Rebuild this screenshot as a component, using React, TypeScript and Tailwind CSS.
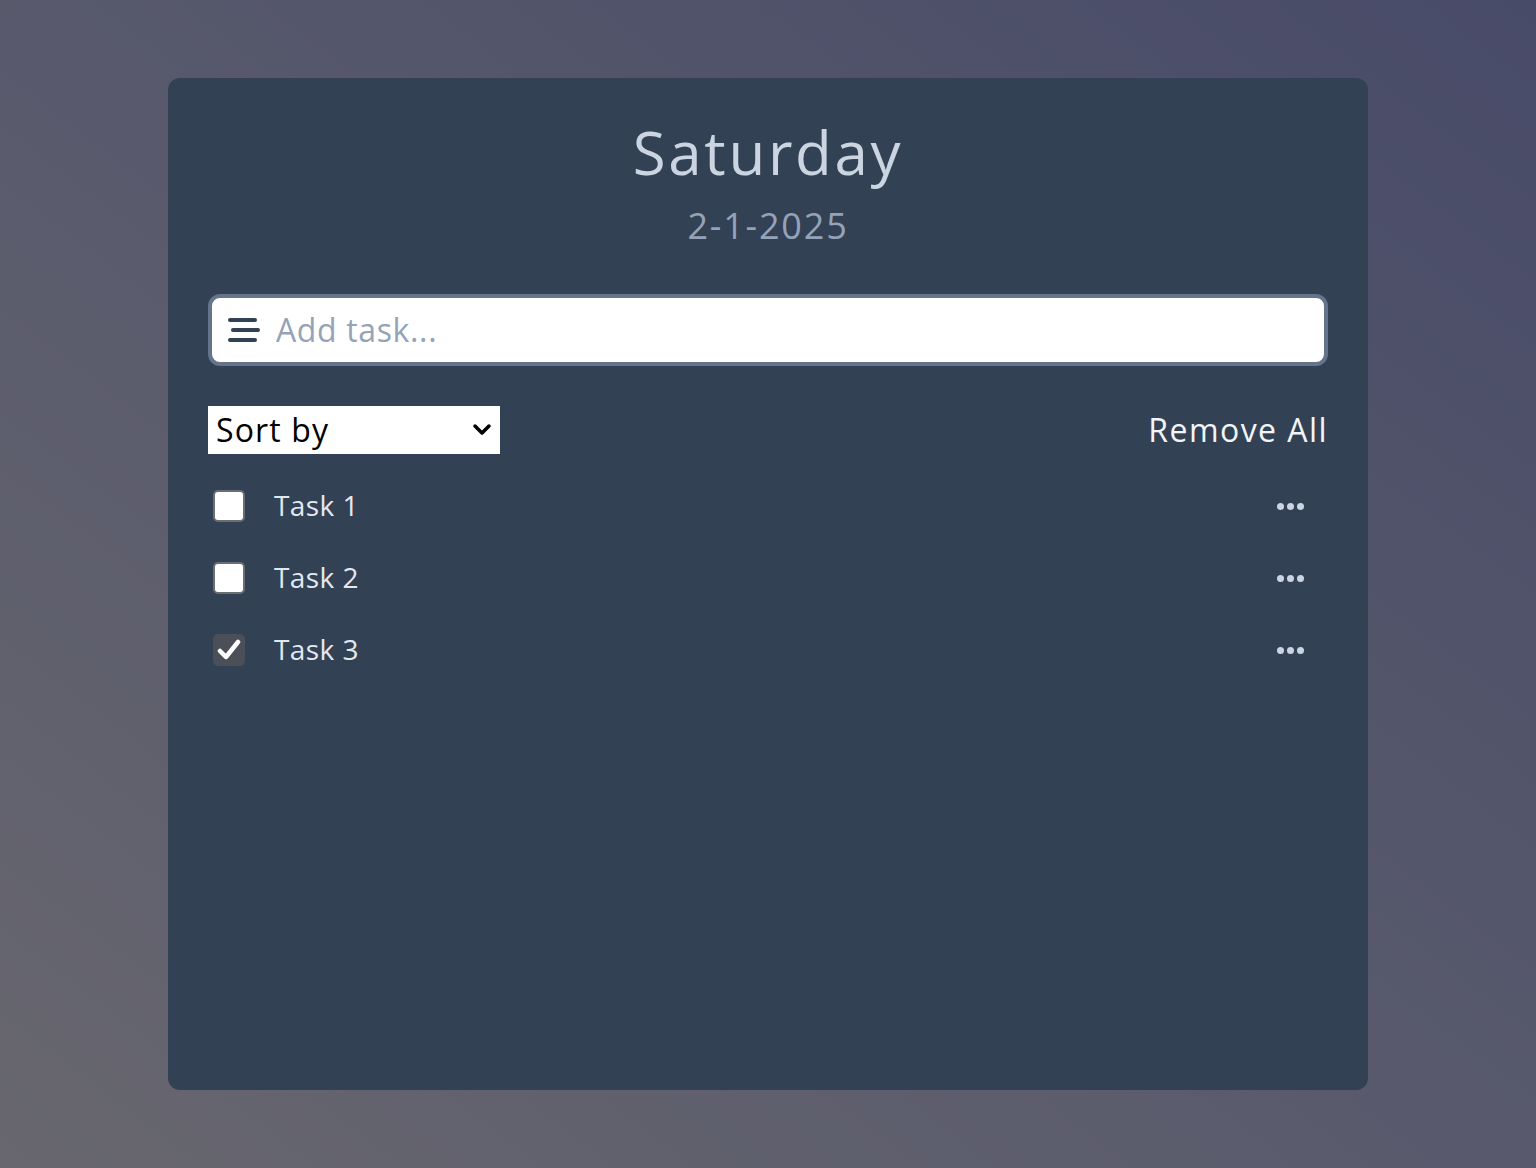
import { useState } from 'react';

interface Task {
  id: number;
  title: string;
  done: boolean;
}

const initialTasks: Task[] = [
  { id: 1, title: 'Task 1', done: false },
  { id: 2, title: 'Task 2', done: false },
  { id: 3, title: 'Task 3', done: true },
];

const App = () => {
  const [tasks, setTasks] = useState<Task[]>(initialTasks);
  const [text, setText] = useState<string>('');

  const toggle = (id: number) => {
    setTasks(tasks.map((t) => (t.id === id ? { ...t, done: !t.done } : t)));
  };

  return (
    <div
      className="min-h-screen w-full bg-linear-to-bl from-[#484b68] to-[#68676f] pt-[78px] pb-[78px]"
      style={{ fontFamily: '"Open Sans", "Noto Sans", sans-serif' }}
    >
      <div className="mx-auto flex h-[1012px] w-[1200px] flex-col rounded-xl bg-[#334155] px-10 pt-11">
        <h1 className="text-center text-6xl leading-[60px] tracking-[0.045em] text-[#cbd5e1]">Saturday</h1>
        <p className="mt-6 text-center text-4xl leading-10 tracking-[0.05em] text-[#94a3b8]">2-1-2025</p>

        <div className="mt-12 flex h-[72px] items-center rounded-xl border-4 border-[#64748b] bg-white pl-4 pr-4">
          <svg width="32" height="28" viewBox="0 0 32 28" className="shrink-0">
            <line x1="2" y1="4" x2="27" y2="4" stroke="#334155" strokeWidth="4" strokeLinecap="round" />
            <line x1="5" y1="14" x2="30" y2="14" stroke="#334155" strokeWidth="4" strokeLinecap="round" />
            <line x1="2" y1="24" x2="27" y2="24" stroke="#334155" strokeWidth="4" strokeLinecap="round" />
          </svg>
          <input
            type="text"
            placeholder="Add task..."
            value={text}
            onChange={(e) => setText(e.target.value)}
            className="ml-4 w-full bg-transparent text-[32px] tracking-[0.02em] text-[#334155] outline-none placeholder:text-[#94a3b8]"
          />
        </div>

        <div className="mt-10 flex items-center justify-between">
          <div className="relative h-12 w-[292px] bg-white">
            <select className="h-full w-full appearance-none bg-transparent pl-2 text-[32px] tracking-[0.035em] text-black outline-none">
              <option>Sort by</option>
              <option>Name</option>
              <option>Date</option>
            </select>
            <svg width="20" height="14" viewBox="0 0 20 14" className="pointer-events-none absolute right-2 top-[17px]">
              <path d="M3 3 L10 10 L17 3" fill="none" stroke="#000" strokeWidth="3.5" strokeLinecap="round" strokeLinejoin="round" />
            </svg>
          </div>
          <button className="text-[32px] tracking-[0.045em] text-[#f1f5f9]">Remove All</button>
        </div>

        <ul className="mt-4">
          {tasks.map((task) => (
            <li key={task.id} className="flex h-[72px] items-center">
              <button
                onClick={() => toggle(task.id)}
                className={
                  task.done
                    ? 'ml-[5px] flex h-8 w-8 items-center justify-center rounded-[5px] bg-[#4a4f58]'
                    : 'ml-[5px] h-8 w-8 rounded-[5px] border-2 border-[#6b6e73] bg-white'
                }
              >
                {task.done && (
                  <svg width="24" height="22" viewBox="0 0 24 22">
                    <path d="M3 12 L9 18 L21 3" fill="none" stroke="#fff" strokeWidth="4.5" strokeLinecap="round" strokeLinejoin="round" />
                  </svg>
                )}
              </button>
              <span className="ml-[29px] -mt-[2px] text-[28px] tracking-[0.015em] text-[#e2e8f0]">{task.title}</span>
              <button className="ml-auto mr-6 flex items-center gap-[3px]">
                <span className="h-[7px] w-[7px] rounded-full bg-[#cbd5e1]" />
                <span className="h-[7px] w-[7px] rounded-full bg-[#cbd5e1]" />
                <span className="h-[7px] w-[7px] rounded-full bg-[#cbd5e1]" />
              </button>
            </li>
          ))}
        </ul>
      </div>
    </div>
  );
};

export default App;
